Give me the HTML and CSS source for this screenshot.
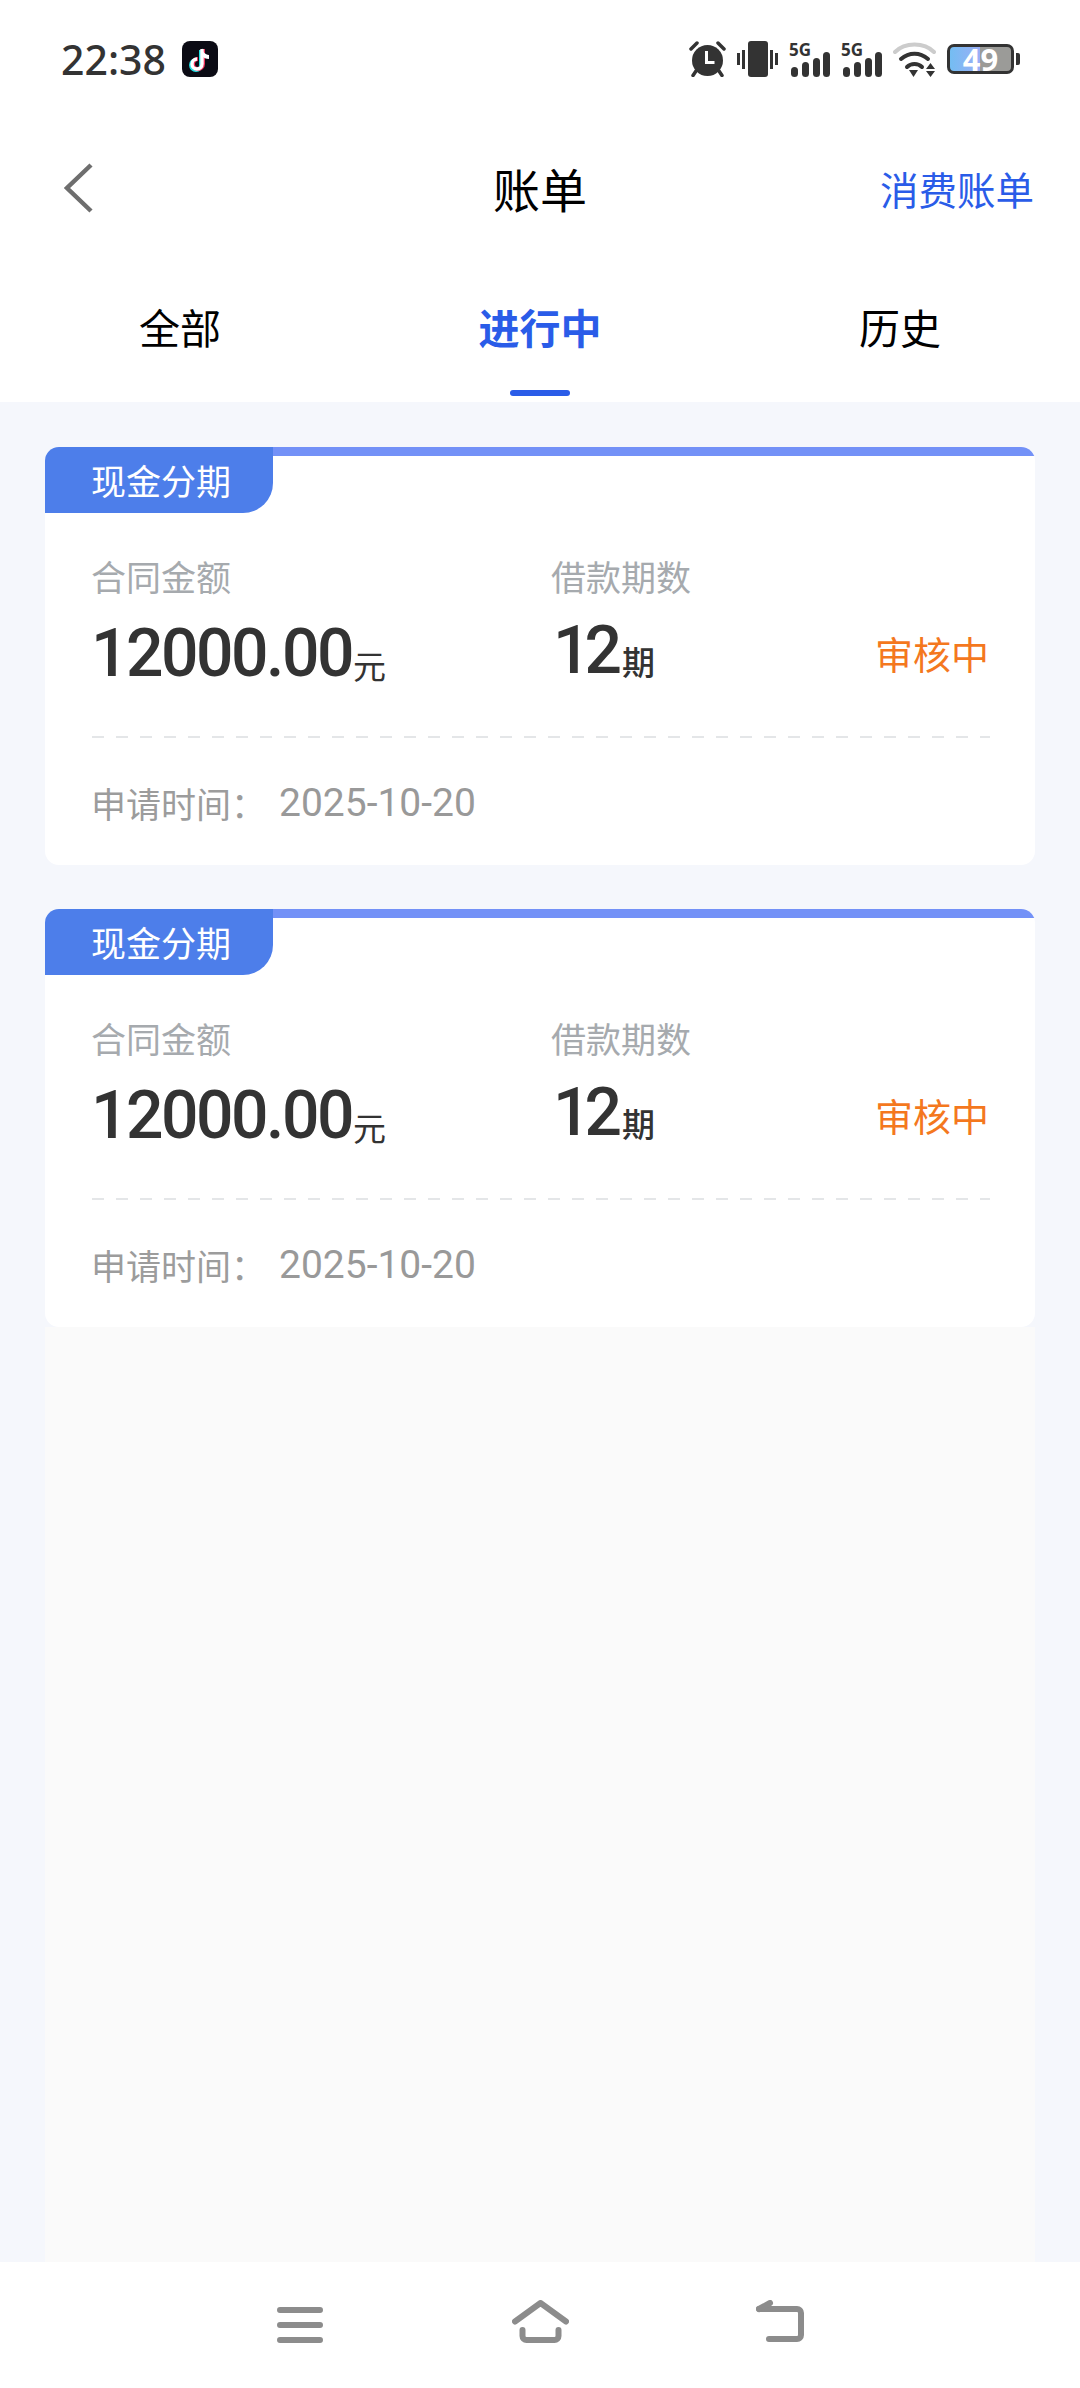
FILE: index.html
```html
<!DOCTYPE html>
<html lang="zh-CN">
<head>
  <meta charset="UTF-8" />
  <meta name="viewport" content="width=device-width, initial-scale=1.0"/>
  <title>账单</title>
  <link rel="stylesheet" href="styles.css">
</head>
<body>
  <div class="app">
    <div class="status-bar">
      <div class="status-left">
        <span class="clock">22:38</span>
        <svg class="tiktok" width="36" height="36" viewBox="0 0 36 36">
          <rect width="36" height="36" rx="8" fill="#0b0b14"/>
          <path d="M20 8v15a5 5 0 1 1-5-5" fill="none" stroke="#25e0e6" stroke-width="4" transform="translate(-1 1)"/>
          <path d="M20 8v15a5 5 0 1 1-5-5" fill="none" stroke="#f0305a" stroke-width="4" transform="translate(1 0)"/>
          <path d="M20 8v15a5 5 0 1 1-5-5" fill="none" stroke="#fff" stroke-width="3.4"/>
          <path d="M20 7c.5 4 3 6.500 7 7v4c-3 0-5.500-1-7-3z" fill="#fff"/>
        </svg>
      </div>
      <div class="status-right">
        <svg width="37" height="36" viewBox="0 0 37 36">
          <circle cx="18.500" cy="19.500" r="15.500" fill="#333"/>
          <path d="M17.500 10v11.500h8" fill="none" stroke="#fff" stroke-width="3"/>
          <path d="M2 8l6-6M35 8l-6-6M7 30l-3 4.500M30 30l3 4.500" stroke="#333" stroke-width="3.500" stroke-linecap="round"/>
        </svg>
        <svg width="41" height="36" viewBox="0 0 41 36">
          <rect x="11" width="20" height="36" rx="3" fill="#333"/>
          <path d="M1.500 12v12M39.500 12v12M6.500 9v19M34.500 9v19" stroke="#333" stroke-width="3"/>
        </svg>
        <div class="signal">
          <span class="net">5G</span>
          <svg width="39" height="25" viewBox="0 0 39 25">
            <rect x="0" y="15" width="7" height="10" rx="3.500" fill="#333"/>
            <rect x="11" y="10" width="7" height="15" rx="3.500" fill="#333"/>
            <rect x="22" y="6" width="7" height="19" rx="3.500" fill="#333"/>
            <rect x="32" y="0" width="7" height="25" rx="3.500" fill="#333"/>
          </svg>
        </div>
        <div class="signal">
          <span class="net">5G</span>
          <svg width="39" height="25" viewBox="0 0 39 25">
            <rect x="0" y="15" width="7" height="10" rx="3.500" fill="#333"/>
            <rect x="11" y="10" width="7" height="15" rx="3.500" fill="#333"/>
            <rect x="22" y="6" width="7" height="19" rx="3.500" fill="#333"/>
            <rect x="32" y="0" width="7" height="25" rx="3.500" fill="#333"/>
          </svg>
        </div>
        <svg width="43" height="36" viewBox="0 0 43 36">
          <path d="M2 11C12 1 31 1 41 11" fill="none" stroke="#ccc" stroke-width="4" stroke-linecap="round"/>
          <path d="M8 18c8-7 19-7 27 0" fill="none" stroke="#333" stroke-width="4" stroke-linecap="round"/>
          <path d="M14 26c4-4 11-4 15 0" fill="none" stroke="#333" stroke-width="4" stroke-linecap="round"/>
          <path d="M16 29h9l-4.500 7z" fill="#333"/>
          <path d="M33 28l4.500-6 4.500 6zM33 30l4.500 6 4.500-6z" fill="#333"/>
        </svg>
        <div class="battery">
          <div class="battery-body"><span class="battery-level">49</span></div>
          <span class="battery-nub"></span>
        </div>
      </div>
    </div>

    <div class="nav-bar">
      <svg class="back" width="29" height="50" viewBox="0 0 29 50">
        <path d="M27 2L3 25l24 23" fill="none" stroke="#6e6e6e" stroke-width="4.500"/>
      </svg>
      <h1 class="nav-title">账单</h1>
      <a class="nav-link">消费账单</a>
    </div>

    <div class="tabs">
      <div class="tab">全部</div>
      <div class="tab tab-active">进行中</div>
      <div class="tab">历史</div>
    </div>

    <div class="content">
      <div class="card">
        <div class="card-head">
          <span class="badge">现金分期</span>
          <span class="strip"></span>
        </div>
        <div class="card-main">
          <div class="col col-amount">
            <div class="label">合同金额</div>
            <div class="value">12000.00<span class="unit">元</span></div>
          </div>
          <div class="col col-term">
            <div class="label">借款期数</div>
            <div class="value value-term">12<span class="unit unit-bold">期</span></div>
          </div>
          <div class="state">审核中</div>
        </div>
        <div class="dash"></div>
        <div class="card-foot"><span class="foot-label">申请时间：</span><span class="foot-date">2025-10-20</span></div>
      </div>

      <div class="card">
        <div class="card-head">
          <span class="badge">现金分期</span>
          <span class="strip"></span>
        </div>
        <div class="card-main">
          <div class="col col-amount">
            <div class="label">合同金额</div>
            <div class="value">12000.00<span class="unit">元</span></div>
          </div>
          <div class="col col-term">
            <div class="label">借款期数</div>
            <div class="value value-term">12<span class="unit unit-bold">期</span></div>
          </div>
          <div class="state">审核中</div>
        </div>
        <div class="dash"></div>
        <div class="card-foot"><span class="foot-label">申请时间：</span><span class="foot-date">2025-10-20</span></div>
      </div>

      <div class="rest"></div>
    </div>

    <div class="bottom-bar">
      <svg width="46" height="36" viewBox="0 0 46 36">
        <path d="M3 3h40M3 18h40M3 33h40" stroke="#8c8c8c" stroke-width="6" stroke-linecap="round"/>
      </svg>
      <svg width="57" height="43" viewBox="0 0 57 43">
        <path d="M3 21.500L28.500 3 54 21.500" fill="none" stroke="#8c8c8c" stroke-width="6" stroke-linecap="round" stroke-linejoin="round"/>
        <path d="M10.500 30v6a4 4 0 0 0 4 4h28a4 4 0 0 0 4-4v-6" fill="none" stroke="#8c8c8c" stroke-width="6" stroke-linecap="round"/>
      </svg>
      <svg width="48" height="42" viewBox="0 0 48 42">
        <path d="M3 9h38a4 4 0 0 1 4 4v22a4 4 0 0 1-4 4H13" fill="none" stroke="#8c8c8c" stroke-width="6" stroke-linecap="round" stroke-linejoin="round"/>
        <path d="M3 9l11-6" fill="none" stroke="#8c8c8c" stroke-width="6" stroke-linecap="round"/>
      </svg>
    </div>
  </div>
</body>
</html>
```

FILE: styles.css
```css
* { box-sizing: border-box; }
html, body { margin: 0; padding: 0; }
body { font-family: "Noto Sans CJK SC", "Noto Sans", sans-serif; background: #fff; }
.app { width: 1080px; height: 2388px; display: flex; flex-direction: column; background: #fff; overflow: hidden; }

.status-bar { height: 118px; padding: 0 60px 0 61px; display: flex; justify-content: space-between; align-items: center; }
.status-left { display: flex; align-items: center; gap: 16px; }
.clock { font-family: "Noto Sans", sans-serif; font-weight: 500; font-size: 41px; line-height: 48px; color: #333; }
.status-right { display: flex; align-items: center; gap: 11px; }
.signal { position: relative; width: 41px; height: 36px; display: flex; align-items: flex-end; justify-content: flex-end; }
.net { position: absolute; top: 0; left: 0; font-family: "Noto Sans", sans-serif; font-weight: 700; font-size: 17px; line-height: 17px; color: #333; }
.battery { display: flex; align-items: center; gap: 2px; }
.battery-body { width: 67px; height: 30px; border: 3px solid #333; border-radius: 7px; background: linear-gradient(90deg, #74bdf2 0, #9aaef6 49%, #9b9b98 49%); display: flex; align-items: center; justify-content: center; }
.battery-level { font-family: "Noto Sans", sans-serif; font-weight: 700; font-size: 31px; line-height: 24px; color: #fff; }
.battery-nub { width: 4px; height: 12px; background: #333; border-radius: 0 2px 2px 0; }

.nav-bar { height: 144px; padding: 0 46px 5px; display: grid; grid-template-columns: 1fr auto 1fr; align-items: center; }
.back { margin-left: 18px; }
.nav-title { margin: 0; font-size: 47px; line-height: 64px; font-weight: 400; color: #000; }
.nav-link { justify-self: end; font-size: 38.500px; line-height: 56px; color: #2a5ce8; }

.tabs { height: 140px; display: grid; grid-template-columns: repeat(3, 1fr); }
.tab { text-align: center; font-size: 41px; line-height: 56px; padding-top: 36px; color: #000; position: relative; }
.tab-active { color: #2a5ce8; font-size: 41px; font-weight: 700; }
.tab-active::after { content: ""; position: absolute; left: 50%; margin-left: -30px; top: 128px; width: 60px; height: 6px; border-radius: 3px; background: #2a5ce8; }

.content { flex: 1; background: #f5f7fc; padding: 45px 45px 0; display: flex; flex-direction: column; gap: 44px; min-height: 0; }
.card { background: #fff; border-radius: 14px; overflow: hidden; height: 418px; flex-shrink: 0; }
.card-head { display: flex; align-items: flex-start; height: 66px; }
.badge { width: 228px; height: 66px; padding-left: 46px; background: #4d7eea; color: #fff; font-size: 35px; line-height: 66px; border-bottom-right-radius: 30px; }
.strip { flex: 1; height: 9px; background: #7391f7; }

.card-main { display: flex; align-items: flex-start; padding: 39px 46px 0 46px; height: 215px; }
.col-amount { width: 460px; }
.col-term { flex: 1; }
.label { font-size: 35px; line-height: 48px; color: #a6aaae; }
.value { font-family: "Roboto", sans-serif; font-weight: 500; font-size: 66px; line-height: 74px; letter-spacing: -2.500px; color: #333; margin-top: 17px; }
.value-term { margin-top: 14px; padding-left: 2px; letter-spacing: -6px; }
.unit { font-family: "Noto Sans CJK SC", sans-serif; font-weight: 400; font-size: 33px; letter-spacing: 0; margin-left: 1px; vertical-align: -3px; }
.unit-bold { font-weight: 500; margin-left: 6px; vertical-align: -2px; }
.state { font-size: 38px; line-height: 52px; color: #f4781e; margin-top: 75px; }

.dash { height: 2px; margin: 8px 45px 0 47px; background: repeating-linear-gradient(90deg, #e4e6e8 0, #e4e6e8 12px, transparent 12px, transparent 24px); }
.card-foot { padding: 39px 46px 0; display: flex; align-items: center; line-height: 52px; }
.foot-label { width: 188px; font-size: 35px; color: #9c9c9c; }
.foot-date { font-family: "Roboto", sans-serif; font-size: 39px; color: #999; }

.rest { flex: 1; background: #fafafa; margin-top: -44px; }

.bottom-bar { height: 126px; background: #fff; display: flex; align-items: flex-start; padding: 38px 0 0 277px; }
.bottom-bar svg:nth-child(1) { margin-top: 7px; }
.bottom-bar svg:nth-child(2) { margin-left: 189px; }
.bottom-bar svg:nth-child(3) { margin-left: 187px; }
```
